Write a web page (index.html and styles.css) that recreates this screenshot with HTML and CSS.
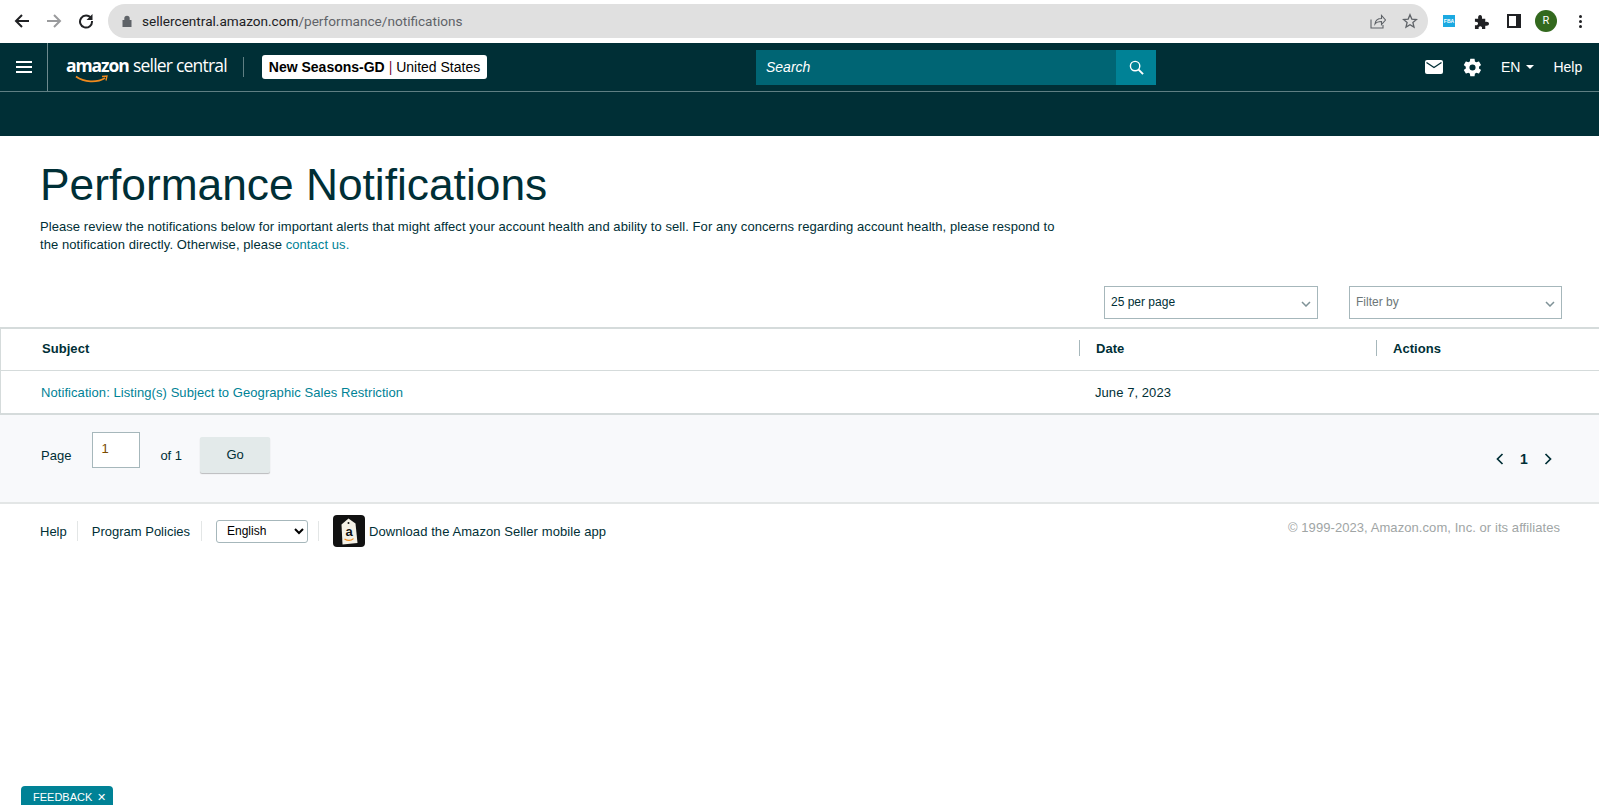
FILE: index.html
```html
<!DOCTYPE html>
<html lang="en">
<head>
	<meta charset="UTF-8">
	<title>Performance Notifications</title>
	<link rel="stylesheet" href="styles.css">
</head>
<body>
<div class="browser_bar">
	<svg class="tool_icon arrow_back" viewBox="0 0 16 16"><path d="M15 8H2M8 2L2 8l6 6" fill="none" stroke="#202124" stroke-width="2"/></svg>
	<svg class="tool_icon arrow_next" viewBox="0 0 16 16"><path d="M1 8h13M8 2l6 6-6 6" fill="none" stroke="#9a9b9d" stroke-width="2"/></svg>
	<svg class="tool_icon reload" viewBox="0 0 16 16"><path d="M13 5.2A6 6 0 1 0 14 8" fill="none" stroke="#202124" stroke-width="2"/><path d="M14.5 1v6h-6z" fill="#202124"/></svg>
	<div class="omnibox">
		<svg class="lock" viewBox="0 0 10 12"><path d="M2.3 5V3.4a2.7 2.7 0 0 1 5.4 0V5H9.500v7H.5V5z" fill="#5f6368"/></svg>
		<span class="url"><span class="url_host">sellercentral.amazon.com</span>/performance/notifications</span>
		<svg class="omni_share" viewBox="0 0 16 16"><path d="M1 6.500V15h12v-3M5 11c.5-4 3-5.500 6.500-5.500V2.500L15.500 7l-4 4.500V8.500C9 8.500 6.500 9 5 11z" fill="none" stroke="#5f6368" stroke-width="1.100"/></svg>
		<svg class="omni_star" viewBox="0 0 16 16"><path d="M8 1.800l1.800 4.300 4.700.4-3.600 3 1.100 4.600L8 11.700l-4 2.400 1.100-4.600-3.600-3 4.700-.4z" fill="none" stroke="#5f6368" stroke-width="1.300"/></svg>
	</div>
	<div class="ext_fba">FBA</div>
	<svg class="ext_icon" viewBox="0 0 16 16"><path d="M1 5h3.500C4 2.500 5 1 6.500 1S9 2.500 8.500 5H12v3.500c2.500-.5 4 .5 4 2s-1.500 2.500-4 2V16H8.500c.5-2-.5-3-1.800-3S4.500 14 5 16H1v-4c2 .5 3.300-.5 3.300-1.800S3 8 1 8.500z" fill="#202124"/></svg>
	<div class="ext_panel"><span class="ext_panel_in"></span></div>
	<div class="avatar">R</div>
	<div class="dots"><i></i><i></i><i></i></div>
</div>

<div class="nav_wrap">
	<div class="nav_top">
		<div class="nav_menu">
			<svg class="menu_icon" viewBox="0 0 16 12"><path d="M0 1h16M0 6h16M0 11h16" stroke="#fff" stroke-width="1.800"/></svg>
		</div>
		<div class="logo">
			<span class="logo_amazon">amazon</span><span class="logo_seller">seller central</span>
			<svg class="logo_smile" viewBox="0 0 34 9"><path d="M1 1.500C9 7.500 22 8 30 3" fill="none" stroke="#f08a1d" stroke-width="1.700"/><path d="M27 1.500l5-.5-1 4.500" fill="none" stroke="#f08a1d" stroke-width="1.300"/></svg>
		</div>
		<div class="nav_sep"></div>
		<div class="account_badge"><b>New Seasons-GD</b> <span class="badge_pipe">|</span> United States</div>
		<div class="nav_search">
			<div class="search_input">Search</div>
			<div class="search_btn">
				<svg viewBox="0 0 16 16" class="search_icon"><circle cx="6.500" cy="6.500" r="5" fill="none" stroke="#fff" stroke-width="1.500"/><path d="M10.200 10.200L15 15" stroke="#fff" stroke-width="2"/></svg>
			</div>
		</div>
		<div class="nav_right">
			<svg class="mail_icon" viewBox="0 0 18 14"><rect width="18" height="14" rx="2" fill="#fff"/><path d="M1.500 2.500L9 7.500l7.500-5" fill="none" stroke="#002f36" stroke-width="1.300"/></svg>
			<svg class="gear_icon" viewBox="0 0 24 24"><path fill="#fff" d="M19.400 13c.1-.3.100-.7.100-1s0-.7-.1-1l2.100-1.600c.2-.2.200-.4.100-.6l-2-3.500c-.1-.2-.4-.3-.6-.2l-2.500 1c-.5-.4-1.100-.7-1.700-1l-.4-2.700c0-.2-.2-.4-.5-.4h-4c-.2 0-.4.200-.5.400l-.4 2.700c-.6.200-1.200.6-1.700 1l-2.500-1c-.2-.1-.5 0-.6.200l-2 3.500c-.1.200-.1.500.1.600L4.400 11c0 .3-.1.700-.1 1s0 .7.1 1l-2.100 1.600c-.2.200-.2.400-.1.600l2 3.500c.1.200.4.300.6.200l2.500-1c.5.400 1.100.7 1.700 1l.4 2.700c0 .2.200.4.500.4h4c.2 0 .4-.2.500-.4l.4-2.700c.6-.2 1.200-.6 1.700-1l2.500 1c.2.1.5 0 .6-.2l2-3.500c.1-.2.100-.5-.1-.6zM12 15.500a3.500 3.500 0 1 1 0-7 3.500 3.500 0 0 1 0 7z"/></svg>
			<span class="nav_lang">EN</span><span class="lang_caret"></span>
			<span class="nav_help">Help</span>
		</div>
	</div>
	<div class="nav_bottom"></div>
</div>

<div class="page_head">
	<h1 class="page_title">Performance Notifications</h1>
	<p class="page_desc">Please review the notifications below for important alerts that might affect your account health and ability to sell. For any concerns regarding account health, please respond to the notification directly. Otherwise, please <a class="link" href="#">contact us.</a></p>
</div>

<div class="filter_row">
	<div class="drop_box drop_page">25 per page
		<svg class="drop_arrow" viewBox="0 0 10 6"><path d="M1 1l4 4 4-4" fill="none" stroke="#7f9297" stroke-width="1.500"/></svg>
	</div>
	<div class="drop_box drop_filter">Filter by
		<svg class="drop_arrow" viewBox="0 0 10 6"><path d="M1 1l4 4 4-4" fill="none" stroke="#7f9297" stroke-width="1.500"/></svg>
	</div>
</div>

<div class="table_wrap">
	<div class="table_row table_head">
		<div class="col_subject">Subject</div>
		<div class="col_date"><span class="col_line"></span>Date</div>
		<div class="col_action"><span class="col_line"></span>Actions</div>
	</div>
	<div class="table_row table_body">
		<div class="col_subject"><a class="link" href="#">Notification: Listing(s) Subject to Geographic Sales Restriction</a></div>
		<div class="col_date">June 7, 2023</div>
		<div class="col_action"></div>
	</div>
</div>

<div class="pager_wrap">
	<span class="pager_page">Page</span>
	<div class="pager_input">1</div>
	<span class="pager_of">of 1</span>
	<div class="pager_go">Go</div>
	<div class="pager_nav">
		<svg class="pager_chev" viewBox="0 0 8 12"><path d="M6.500 1L1.500 6l5 5" fill="none" stroke="#002f36" stroke-width="1.700"/></svg>
		<b class="pager_num">1</b>
		<svg class="pager_chev" viewBox="0 0 8 12"><path d="M1.500 1l5 5-5 5" fill="none" stroke="#002f36" stroke-width="1.700"/></svg>
	</div>
</div>

<div class="footer_wrap">
	<span class="foot_item foot_help">Help</span>
	<span class="foot_item foot_policy">Program Policies</span>
	<div class="foot_item foot_lang">
		<select class="lang_select"><option>English</option></select>
	</div>
	<svg class="app_icon" viewBox="0 0 32 32">
		<rect width="32" height="32" rx="4" fill="#111"/>
		<path d="M8.500 9.500l7-6 7 5 2 19.500-15 1.500z" fill="#f4f1e6"/>
		<circle cx="15.500" cy="8" r="1" fill="#111"/>
		<path d="M11.500 24c3 1.800 6.500 1.800 9-.4" fill="none" stroke="#f08a1d" stroke-width="1.200"/>
		<text x="16" y="21" font-family="Liberation Sans" font-size="13" font-weight="700" text-anchor="middle" fill="#111">a</text>
	</svg>
	<span class="app_text">Download the Amazon Seller mobile app</span>
	<span class="copyright">© 1999-2023, Amazon.com, Inc. or its affiliates</span>
</div>

<div class="feedback_tab">FEEDBACK <span class="feedback_x">✕</span></div>
</body>
</html>
```

FILE: styles.css
```css
html,body{margin:0;padding:0;height:805px;overflow:hidden}
body{position:relative;background:#fff;font-family:'Liberation Sans',Arial,sans-serif;font-size:13px;color:#002f36}
h1,p{margin:0;padding:0}
a{text-decoration:none}
.link{color:#008296}

/* browser */
.browser_bar{display:flex;align-items:center;height:43px;box-sizing:border-box;background:#fff;padding-bottom:1px}
.tool_icon{width:16px;height:16px;flex:none}
.arrow_back{margin-left:14px}
.arrow_next{margin-left:16px}
.reload{margin-left:16px}
.omnibox{display:flex;align-items:center;width:1320px;height:34px;margin-left:14px;background:#e0e0e0;border-radius:17px;flex:none}
.lock{width:10px;height:12px;margin-left:14px;flex:none}
.url{margin-left:10px;font-family:'Roboto',sans-serif;font-size:13.600px;color:#5f6368;flex:1}
.url_host{color:#202124}
.omni_share{width:16px;height:16px;margin-right:16px}
.omni_star{width:16px;height:16px;margin-right:10px}
.ext_fba{width:12px;height:12px;margin-left:15px;background:#1ba9e1;color:#fff;font-size:5px;font-weight:bold;line-height:12px;text-align:center;flex:none}
.ext_icon{width:15px;height:15px;margin-left:19px;flex:none}
.ext_panel{width:14px;height:14px;margin-left:18px;background:#202124;flex:none;display:flex;justify-content:flex-start;align-items:center}
.ext_panel_in{width:7px;height:10px;margin-left:2px;background:#fff}
.avatar{width:22px;height:22px;margin-left:14px;border-radius:50%;background:#33691e;color:#fff;font-family:'Roboto',sans-serif;font-size:11px;line-height:22px;text-align:center;flex:none}
.dots{display:flex;flex-direction:column;gap:2px;margin-left:22px}
.dots i{display:block;width:3px;height:3px;border-radius:50%;background:#202124}

/* nav */
.nav_wrap{background:#002f36;height:93px}
.nav_top{display:flex;align-items:center;height:48px;border-bottom:1px solid #5f7f83;position:relative}
.nav_menu{width:48px;height:48px;box-sizing:border-box;border-right:1px solid #6d8a8e;display:flex;align-items:center;justify-content:center;flex:none}
.menu_icon{width:16px;height:12px}
.logo{position:relative;width:195px;height:48px;flex:none;color:#fff}
.logo_amazon{position:absolute;left:18px;top:10px;font-size:17.500px;font-weight:bold;font-family:'Open Sans',sans-serif;letter-spacing:-1.100px}
.logo_seller{position:absolute;left:85px;top:10px;font-size:17.500px;font-family:'Open Sans',sans-serif;letter-spacing:-.8px}
.logo_smile{position:absolute;left:27px;top:32px;width:34px;height:9px}
.nav_sep{width:1px;height:20px;background:#5f7f83;flex:none}
.account_badge{margin-left:18px;width:225px;height:24px;box-sizing:border-box;background:#fff;border-radius:3px;color:#000;font-size:14px;line-height:24px;text-align:center;flex:none}
.badge_pipe{color:#7b0f3c}
.nav_search{display:flex;height:35px;margin-left:269px;flex:none}
.search_input{width:360px;height:35px;box-sizing:border-box;padding-left:10px;background:#006574;color:#fff;font-size:14px;font-style:italic;line-height:35px}
.search_btn{width:40px;height:35px;background:#008296;display:flex;align-items:center;justify-content:center}
.search_icon{width:15px;height:15px}
.nav_right{display:flex;align-items:center;margin-left:269px;color:#fff;font-size:14px;flex:none}
.mail_icon{width:18px;height:14px}
.gear_icon{width:21px;height:21px;margin-left:19px}
.nav_lang{margin-left:18px}
.lang_caret{width:0;height:0;margin-left:6px;border-left:4.500px solid transparent;border-right:4.500px solid transparent;border-top:4.500px solid #fff}
.nav_help{margin-left:19px}
.nav_bottom{height:44px}

/* head */
.page_head{padding:21px 0 0 40px;height:118px;box-sizing:border-box}
.page_title{font-size:44.300px;line-height:56px;font-weight:normal;color:#002f36}
.page_desc{width:1030px;margin-top:5px;font-size:13px;line-height:18px;letter-spacing:.07px}

/* filter */
.filter_row{display:flex;height:73px;box-sizing:border-box;padding:32px 0 0 1104px}
.drop_box{position:relative;height:33px;box-sizing:border-box;border:1px solid #a6b7bb;padding-left:6px;font-size:12px;line-height:30px;background:#fff}
.drop_page{width:214px}
.drop_filter{width:213px;margin-left:31px;color:#6c7778}
.drop_arrow{position:absolute;right:6px;top:14px;width:10px;height:6px}

/* table */
.table_wrap{border:solid #d5dbdb;border-width:2px 0 2px 1px}
.table_row{display:flex;height:42px;align-items:center;font-size:13px;letter-spacing:.07px}
.table_head{height:42px;box-sizing:border-box;padding-bottom:3px;border-bottom:1px solid #d5dbdb;font-weight:bold;letter-spacing:.05px}
.col_subject{width:1079px;box-sizing:border-box;padding-left:40px;flex:none}
.table_head .col_subject{padding-left:41px}
.col_date{position:relative;width:297px;box-sizing:border-box;padding-left:15px;flex:none}
.table_head .col_date{padding-left:16px}
.col_action{position:relative;padding-left:16px;flex:none}
.col_line{position:absolute;left:-1px;top:-1px;width:1px;height:16px;background:#a6b7bb}

/* pager */
.pager_wrap{display:flex;align-items:flex-start;height:89px;box-sizing:border-box;background:#f8f9fb;border-bottom:2px solid #e3e6e6;padding-left:41px;font-size:13px}
.pager_page{margin-top:33px}
.pager_input{width:48px;height:36px;box-sizing:border-box;margin:17px 0 0 21px;padding:7px 0 0 8px;background:#fff;border:1px solid #a6b7bb;color:#7a4b00;line-height:18px}
.pager_of{margin:33px 0 0 20px}
.pager_go{width:70px;height:36px;margin:22px 0 0 18px;background:#e3eaea;border-radius:2px;box-shadow:0 1px 1px rgba(0,0,0,.25);line-height:36px;text-align:center}
.pager_nav{display:flex;align-items:center;margin:36px 0 0 1226px}
.pager_chev{width:8px;height:12px}
.pager_num{margin:0 16px;font-size:14px}

/* footer */
.footer_wrap{display:flex;align-items:center;height:51px;padding:3px 0 0 40px;font-size:13px;box-sizing:border-box;position:relative}
.foot_item{display:flex;align-items:center;height:20px;border-right:1px solid #e3e6e6;flex:none}
.foot_help{padding-right:10px}
.foot_policy{padding:0 11px 0 14px}
.foot_lang{padding:0 10px 0 14px}
.lang_select{width:92px;height:23px;border:1px solid #a6b7bb;border-radius:3px;background:#fff;font-family:'Liberation Sans',sans-serif;font-size:12px;color:#000;padding-left:6px}
.app_icon{width:32px;height:32px;margin-left:14px;flex:none}
.app_text{margin-left:4px;letter-spacing:.08px}
.copyright{position:absolute;right:39px;top:16px;color:#a0a5a5;font-size:13px;letter-spacing:.07px}

/* over the page */
.feedback_tab{position:absolute;left:21px;bottom:0;width:92px;height:19px;box-sizing:border-box;padding-left:12px;background:#008296;border-radius:4px 4px 0 0;color:#fff;font-size:11px;line-height:23px}
.feedback_x{font-size:11px;margin-left:2px}
```
